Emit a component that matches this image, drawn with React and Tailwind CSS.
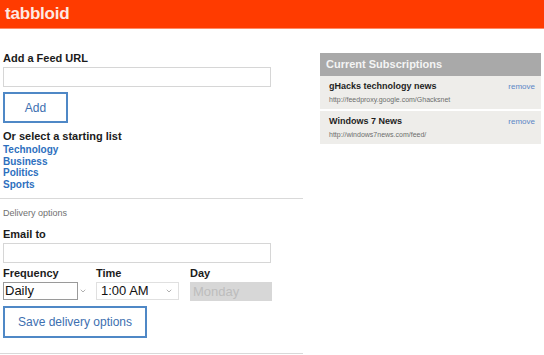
import { ChevronDown } from 'lucide-react'

const font = { fontFamily: '"Liberation Sans", Arial, sans-serif' }

function Field({ className = '' }) {
  return <div className={`h-[20px] w-[268px] border border-[#d6d6d6] bg-white ${className}`} />
}

function Subscription({ title, url }) {
  return (
    <div className="flex justify-between bg-[#eeedea] pl-[9px] pr-[6px] h-[33px]">
      <div className="pt-[4px]">
        <div className="text-[9px] font-bold text-[#1e1e1e] leading-[12px]">{title}</div>
        <div className="text-[7px] text-[#6d6d6d] leading-[10px] mt-[3px]">{url}</div>
      </div>
      <a className="text-[8px] text-[#5b86c6] pt-[6px] leading-[10px]">remove</a>
    </div>
  )
}

export default function App() {
  return (
    <div className="w-[544px] h-[355px] bg-white overflow-hidden" style={font}>
      {/* header */}
      <div className="h-[29px] bg-[#ff3b00] border-b border-[#ff8a66] flex items-center pl-[5px]">
        <span className="text-[17px] font-bold text-[#fde9e2] tracking-[-0.2px] leading-none pb-[1px]">tabbloid</span>
      </div>

      <div className="flex">
        {/* left column */}
        <div className="w-[303px]">
          <div className="pl-[3px]">
            <div className="mt-[22px] text-[11px] font-bold text-[#1b1b1b] leading-[14px]">Add a Feed URL</div>
            <Field className="mt-[2px]" />
            <button className="mt-[5px] h-[31px] w-[65px] border-2 border-[#4f88c6] text-[12px] text-[#3d6fb0] bg-white">
              Add
            </button>
            <div className="mt-[6px] text-[11px] font-bold text-[#1b1b1b] leading-[14px]">Or select a starting list</div>
            <div className="mt-[1px] flex flex-col text-[10px] font-bold text-[#2d6fbe] leading-[11.5px]">
              <a>Technology</a>
              <a>Business</a>
              <a>Politics</a>
              <a>Sports</a>
            </div>
          </div>
          <div className="mt-[8px] h-px bg-[#d9d9d9]" />
          <div className="pl-[3px]">
            <div className="mt-[8px] text-[9px] text-[#707070] leading-[12px]">Delivery options</div>
            <div className="mt-[8px] text-[11px] font-bold text-[#1b1b1b] leading-[14px]">Email to</div>
            <Field className="mt-[2px]" />
            <div className="mt-[3px] flex text-[11px] font-bold text-[#1b1b1b] leading-[14px]">
              <div className="w-[93px]">Frequency</div>
              <div className="w-[94px]">Time</div>
              <div>Day</div>
            </div>
            <div className="mt-[2px] flex items-center h-[18px]">
              <div className="w-[75px] h-[18px] border border-[#9a9a9a] text-[13px] text-[#111] leading-[16px] pl-[1px]">Daily</div>
              <ChevronDown size={8} strokeWidth={2} className="ml-[1px] text-[#8a8a8a]" />
              <div className="ml-[9px] w-[83px] h-[18px] border border-[#e0e0e0] flex items-center justify-between pl-[4px] pr-[5px] text-[13px] text-[#111]">
                <span>1:00 AM</span>
                <ChevronDown size={8} strokeWidth={2} className="text-[#8a8a8a]" />
              </div>
              <div className="ml-[11px] w-[82px] h-[19px] bg-[#d7d7d7] text-[13px] text-[#bdbdbd] leading-[19px] pl-[3px]">Monday</div>
            </div>
            <button className="mt-[6px] h-[32px] w-[144px] border-2 border-[#4f88c6] text-[12px] text-[#3d6fb0] bg-white">
              Save delivery options
            </button>
          </div>
          <div className="mt-[15px] h-px bg-[#d9d9d9]" />
        </div>

        {/* right column */}
        <div className="ml-[17px] w-[221px] mt-[24px]">
          <div className="h-[23px] bg-[#a9a9a9] flex items-center pl-[6px] text-[11px] font-bold text-[#f4f4f4]">
            Current Subscriptions
          </div>
          <Subscription title="gHacks technology news" url="http://feedproxy.google.com/Ghacksnet" />
          <div className="h-[2px] bg-white" />
          <Subscription title="Windows 7 News" url="http://windows7news.com/feed/" />
        </div>
      </div>
    </div>
  )
}
